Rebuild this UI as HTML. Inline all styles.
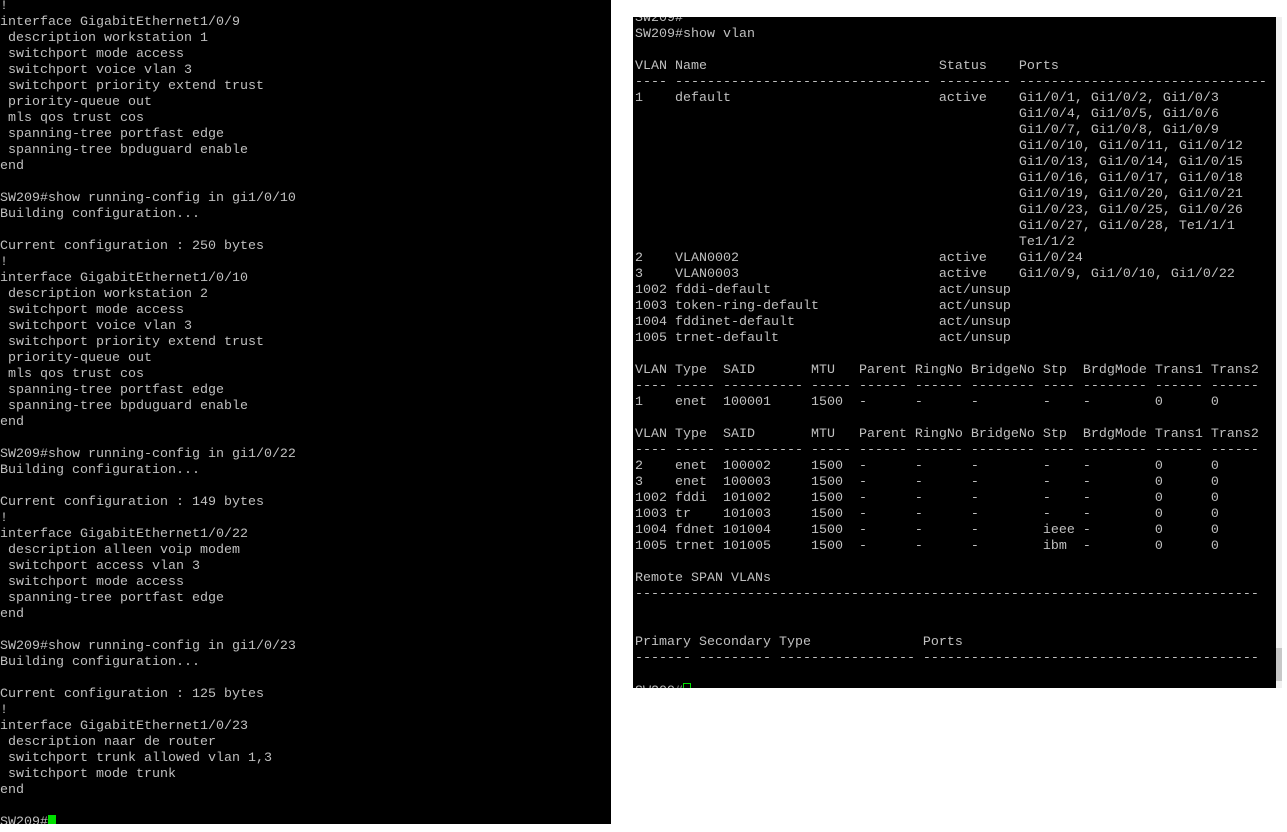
<!DOCTYPE html>
<html><head><style>
html,body{margin:0;padding:0;background:#fff;width:1287px;height:832px;overflow:hidden;position:relative}
.p{position:absolute;background:#000;overflow:hidden}
pre{margin:0;position:absolute;font-family:"Liberation Mono",monospace;font-size:13.33px;line-height:16px;color:#c0c0c0;white-space:pre}
.c{display:inline-block;width:8px;height:12px;background:#00e000;vertical-align:-2px}
.co{display:inline-block;width:6px;height:11px;border:1px solid #00e000;vertical-align:-2px}
</style></head><body>
<div class="p" style="left:0;top:0;width:611px;height:824px">
<pre style="left:0;top:-1px">!
interface GigabitEthernet1/0/9
 description workstation 1
 switchport mode access
 switchport voice vlan 3
 switchport priority extend trust
 priority-queue out
 mls qos trust cos
 spanning-tree portfast edge
 spanning-tree bpduguard enable
end

SW209#show running-config in gi1/0/10
Building configuration...

Current configuration : 250 bytes
!
interface GigabitEthernet1/0/10
 description workstation 2
 switchport mode access
 switchport voice vlan 3
 switchport priority extend trust
 priority-queue out
 mls qos trust cos
 spanning-tree portfast edge
 spanning-tree bpduguard enable
end

SW209#show running-config in gi1/0/22
Building configuration...

Current configuration : 149 bytes
!
interface GigabitEthernet1/0/22
 description alleen voip modem
 switchport access vlan 3
 switchport mode access
 spanning-tree portfast edge
end

SW209#show running-config in gi1/0/23
Building configuration...

Current configuration : 125 bytes
!
interface GigabitEthernet1/0/23
 description naar de router
 switchport trunk allowed vlan 1,3
 switchport mode trunk
end

SW209#<span class="c"></span></pre>
</div>
<div class="p" style="left:633px;top:17px;width:643px;height:671px">
<pre style="left:2px;top:-6px">SW209#
SW209#show vlan

VLAN Name                             Status    Ports
---- -------------------------------- --------- -------------------------------
1    default                          active    Gi1/0/1, Gi1/0/2, Gi1/0/3
                                                Gi1/0/4, Gi1/0/5, Gi1/0/6
                                                Gi1/0/7, Gi1/0/8, Gi1/0/9
                                                Gi1/0/10, Gi1/0/11, Gi1/0/12
                                                Gi1/0/13, Gi1/0/14, Gi1/0/15
                                                Gi1/0/16, Gi1/0/17, Gi1/0/18
                                                Gi1/0/19, Gi1/0/20, Gi1/0/21
                                                Gi1/0/23, Gi1/0/25, Gi1/0/26
                                                Gi1/0/27, Gi1/0/28, Te1/1/1
                                                Te1/1/2
2    VLAN0002                         active    Gi1/0/24
3    VLAN0003                         active    Gi1/0/9, Gi1/0/10, Gi1/0/22
1002 fddi-default                     act/unsup
1003 token-ring-default               act/unsup
1004 fddinet-default                  act/unsup
1005 trnet-default                    act/unsup

VLAN Type  SAID       MTU   Parent RingNo BridgeNo Stp  BrdgMode Trans1 Trans2
---- ----- ---------- ----- ------ ------ -------- ---- -------- ------ ------
1    enet  100001     1500  -      -      -        -    -        0      0

VLAN Type  SAID       MTU   Parent RingNo BridgeNo Stp  BrdgMode Trans1 Trans2
---- ----- ---------- ----- ------ ------ -------- ---- -------- ------ ------
2    enet  100002     1500  -      -      -        -    -        0      0
3    enet  100003     1500  -      -      -        -    -        0      0
1002 fddi  101002     1500  -      -      -        -    -        0      0
1003 tr    101003     1500  -      -      -        -    -        0      0
1004 fdnet 101004     1500  -      -      -        ieee -        0      0
1005 trnet 101005     1500  -      -      -        ibm  -        0      0

Remote SPAN VLANs
------------------------------------------------------------------------------


Primary Secondary Type              Ports
------- --------- ----------------- ------------------------------------------

SW209#<span class="co"></span></pre>
</div>
<div style="position:absolute;left:1276px;top:17px;width:6px;height:671px;background:#f0f0f0"></div>
<div style="position:absolute;left:1276px;top:648px;width:6px;height:33px;background:#c8c8c8"></div>
</body></html>
